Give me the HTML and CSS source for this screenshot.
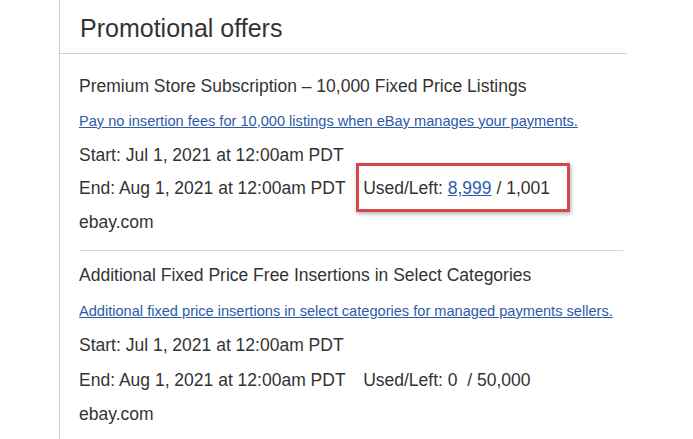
FILE: index.html
```html
<!DOCTYPE html>
<html>
<head>
<meta charset="utf-8">
<link rel="stylesheet" href="styles.css">
</head>
<body>
<div class="page">
  <section class="panel">
    <h1 class="panel-title">Promotional offers</h1>
    <div class="offer first">
      <div class="row offer-name">Premium Store Subscription – 10,000 Fixed Price Listings</div>
      <div class="row"><a class="offer-link" href="#">Pay no insertion fees for 10,000 listings when eBay manages your payments.</a></div>
      <div class="row">Start: Jul 1, 2021 at 12:00am PDT</div>
      <div class="row">End: Aug 1, 2021 at 12:00am PDT <span class="used hl">Used/Left: <a class="num-link" href="#">8,999</a> / 1,001</span></div>
      <div class="row">ebay.com</div>
    </div>
    <div class="offer second">
      <div class="row offer-name">Additional Fixed Price Free Insertions in Select Categories</div>
      <div class="row"><a class="offer-link" href="#">Additional fixed price insertions in select categories for managed payments sellers.</a></div>
      <div class="row">Start: Jul 1, 2021 at 12:00am PDT</div>
      <div class="row">End: Aug 1, 2021 at 12:00am PDT <span class="used">Used/Left: 0&nbsp; / 50,000</span></div>
      <div class="row">ebay.com</div>
    </div>
  </section>
</div>
</body>
</html>
```
FILE: styles.css
```css
html, body {
  margin: 0;
  padding: 0;
  background: #fff;
}
body {
  font-family: "Liberation Sans", Arial, sans-serif;
  color: #333;
}
.page {
  height: 439px;
  overflow: hidden;
  padding-left: 59px;
}
.panel {
  width: 567px;
  min-height: 439px;
  border-left: 1px solid #c9c9c9;
}
.panel-title {
  margin: 0;
  padding: 14px 0 11px 20px;
  font-size: 25px;
  line-height: 28px;
  font-weight: normal;
  color: #333;
  border-bottom: 1px solid #d0d0d0;
}
.offer {
  margin-left: 19px;
  width: 544px;
  padding: 8px 0 10px;
}
.offer.first {
  padding-top: 16px;
  border-bottom: 1px solid #d9d9d9;
}
.offer.second {
  padding-top: 7px;
}
.row {
  font-size: 17.5px;
  line-height: 33.8px;
  white-space: nowrap;
}
.offer.second .row {
  line-height: 34.6px;
}
.offer-link {
  font-size: 14.6px;
  color: #2d5ba8;
  text-decoration: underline;
}
.num-link {
  color: #2d5ba8;
  text-decoration: underline;
}
.used {
  margin-left: 13px;
}
.hl {
  position: relative;
}
.hl::after {
  content: "";
  position: absolute;
  left: -7px;
  right: -20px;
  top: -15px;
  bottom: -14px;
  border: 3px solid #d5474a;
  box-shadow: 1px 2px 4px rgba(0,0,0,0.3);
}
```
